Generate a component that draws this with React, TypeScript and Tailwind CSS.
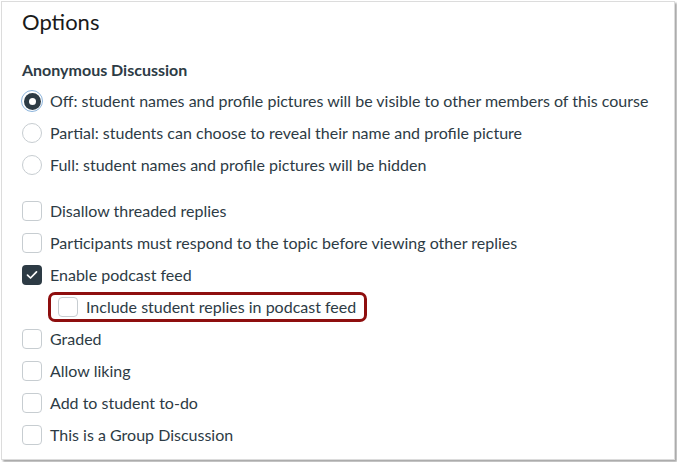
import React from "react";

const Radio = ({ checked }: { checked?: boolean }) =>
  checked ? (
    <div className="flex h-[22px] w-[22px] shrink-0 items-center justify-center rounded-full border-[1.5px] border-[#8cb4dc] bg-white">
      <div className="flex h-[17px] w-[17px] items-center justify-center rounded-full bg-[#2d3b45]">
        <div className="h-[7px] w-[7px] rounded-full bg-white" />
      </div>
    </div>
  ) : (
    <div className="h-[20px] w-[20px] shrink-0 rounded-full border border-[#c7cdd1] bg-white" />
  );

const Check = ({ checked }: { checked?: boolean }) =>
  checked ? (
    <div className="flex h-[20px] w-[20px] shrink-0 items-center justify-center rounded-[4px] bg-[#2d3b45]">
      <svg width="12" height="10" viewBox="0 0 12 10" fill="none">
        <path d="M1.5 5.2 L4.5 8 L10.5 1.8" stroke="white" strokeWidth="1.7" strokeLinecap="round" strokeLinejoin="round" />
      </svg>
    </div>
  ) : (
    <div className="h-[20px] w-[20px] shrink-0 rounded-[4px] border border-[#c7cdd1] bg-white" />
  );

const RadioRow = ({ label, checked }: { label: string; checked?: boolean }) => (
  <div className="flex h-8 items-center">
    <div className="flex w-[28px] items-center">
      <div className={checked ? "-ml-[1px]" : ""}>
        <Radio checked={checked} />
      </div>
    </div>
    <span className="-mt-[1px]">{label}</span>
  </div>
);

const CheckRow = ({ label, checked }: { label: string; checked?: boolean }) => (
  <div className="flex h-8 items-center gap-2">
    <Check checked={checked} />
    <span className="-mt-[1px]">{label}</span>
  </div>
);

export default function App() {
  return (
    <div className="h-[462px] w-[677px] bg-white p-[1px]" style={{ fontFamily: "Lato, 'Open Sans', sans-serif" }}>
      <div className="h-[459px] w-[674px] border border-[#dcdcdc] bg-white pl-[20px] text-[16px] text-[#2d3b45] shadow-[2px_2px_2px_rgba(0,0,0,0.35)]">
        <div className="pt-[6px] text-[22px] leading-[28px] text-[#1a1a1a]">Options</div>
        <div className="mt-[24px] text-[16px] font-bold leading-[20px]">Anonymous Discussion</div>
        <div className="mt-[5px] flex flex-col">
          <RadioRow checked label="Off: student names and profile pictures will be visible to other members of this course" />
          <RadioRow label="Partial: students can choose to reveal their name and profile picture" />
          <RadioRow label="Full: student names and profile pictures will be hidden" />
        </div>
        <div className="mt-[14px] flex flex-col">
          <CheckRow label="Disallow threaded replies" />
          <CheckRow label="Participants must respond to the topic before viewing other replies" />
          <CheckRow checked label="Enable podcast feed" />
          <div className="flex h-8 items-center">
            <div className="ml-[26px] flex h-[30px] w-[319px] items-center gap-2 rounded-[7px] border-[3px] border-[#8e0e0e] pl-[7px]">
              <Check />
              <span className="-mt-[1px]">Include student replies in podcast feed</span>
            </div>
          </div>
          <CheckRow label="Graded" />
          <CheckRow label="Allow liking" />
          <CheckRow label="Add to student to-do" />
          <CheckRow label="This is a Group Discussion" />
        </div>
      </div>
    </div>
  );
}
